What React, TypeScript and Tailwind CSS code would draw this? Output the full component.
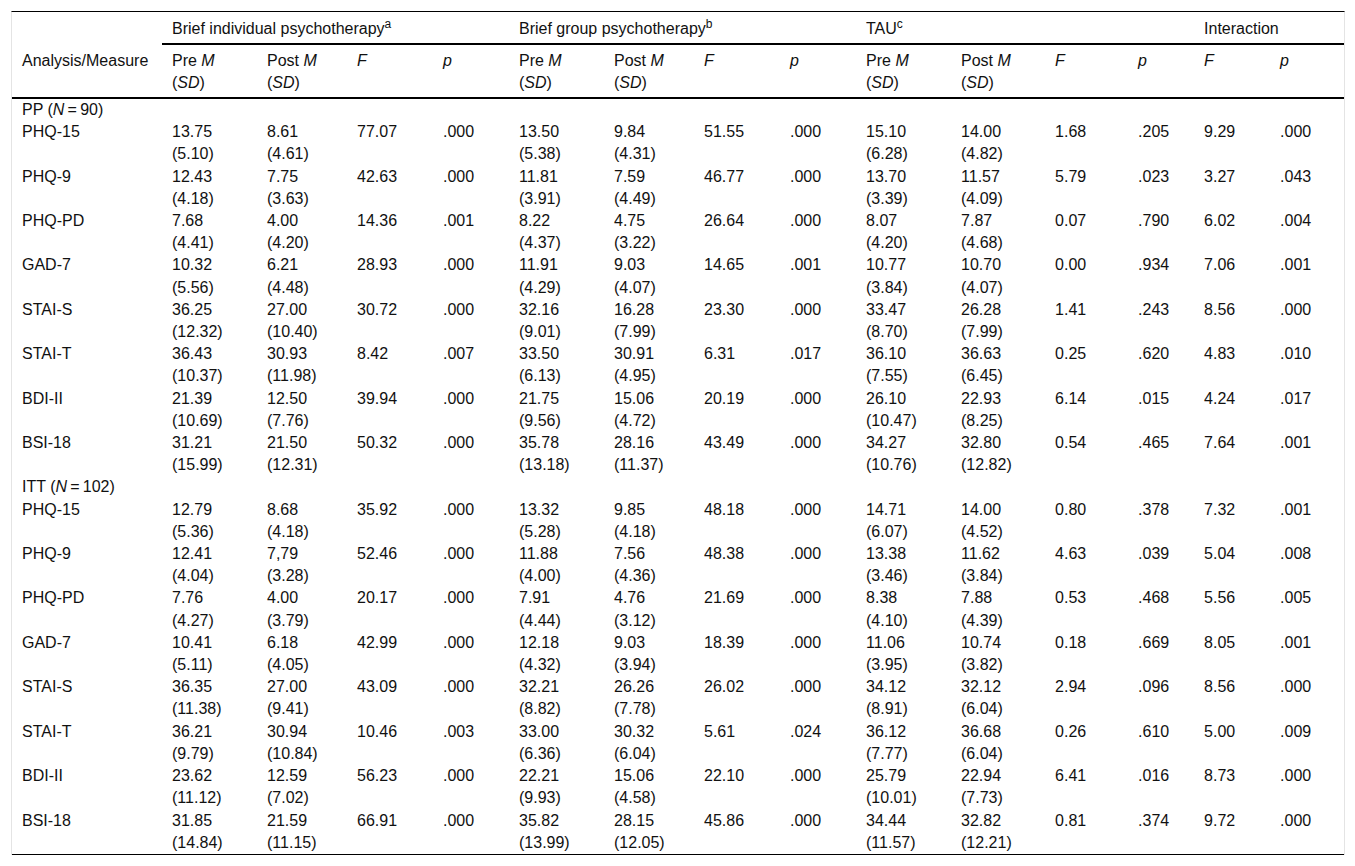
const colWidths = [
  "w-[150px]",
  "w-[95px]",
  "w-[90px]",
  "w-[86px]",
  "w-[76px]",
  "w-[95px]",
  "w-[90px]",
  "w-[86px]",
  "w-[76px]",
  "w-[95px]",
  "w-[94px]",
  "w-[83px]",
  "w-[66px]",
  "w-[76px]",
  "w-[74px]",
];

type Row = { label: string; cells: string[] } | { group: string; n: string };

// pre/post cells hold "mean (sd)" and get split over two lines
const rows: Row[] = [
  { group: "PP", n: "90" },
  { label: "PHQ-15", cells: ["13.75 (5.10)", "8.61 (4.61)", "77.07", ".000", "13.50 (5.38)", "9.84 (4.31)", "51.55", ".000", "15.10 (6.28)", "14.00 (4.82)", "1.68", ".205", "9.29", ".000"] },
  { label: "PHQ-9", cells: ["12.43 (4.18)", "7.75 (3.63)", "42.63", ".000", "11.81 (3.91)", "7.59 (4.49)", "46.77", ".000", "13.70 (3.39)", "11.57 (4.09)", "5.79", ".023", "3.27", ".043"] },
  { label: "PHQ-PD", cells: ["7.68 (4.41)", "4.00 (4.20)", "14.36", ".001", "8.22 (4.37)", "4.75 (3.22)", "26.64", ".000", "8.07 (4.20)", "7.87 (4.68)", "0.07", ".790", "6.02", ".004"] },
  { label: "GAD-7", cells: ["10.32 (5.56)", "6.21 (4.48)", "28.93", ".000", "11.91 (4.29)", "9.03 (4.07)", "14.65", ".001", "10.77 (3.84)", "10.70 (4.07)", "0.00", ".934", "7.06", ".001"] },
  { label: "STAI-S", cells: ["36.25 (12.32)", "27.00 (10.40)", "30.72", ".000", "32.16 (9.01)", "16.28 (7.99)", "23.30", ".000", "33.47 (8.70)", "26.28 (7.99)", "1.41", ".243", "8.56", ".000"] },
  { label: "STAI-T", cells: ["36.43 (10.37)", "30.93 (11.98)", "8.42", ".007", "33.50 (6.13)", "30.91 (4.95)", "6.31", ".017", "36.10 (7.55)", "36.63 (6.45)", "0.25", ".620", "4.83", ".010"] },
  { label: "BDI-II", cells: ["21.39 (10.69)", "12.50 (7.76)", "39.94", ".000", "21.75 (9.56)", "15.06 (4.72)", "20.19", ".000", "26.10 (10.47)", "22.93 (8.25)", "6.14", ".015", "4.24", ".017"] },
  { label: "BSI-18", cells: ["31.21 (15.99)", "21.50 (12.31)", "50.32", ".000", "35.78 (13.18)", "28.16 (11.37)", "43.49", ".000", "34.27 (10.76)", "32.80 (12.82)", "0.54", ".465", "7.64", ".001"] },
  { group: "ITT", n: "102" },
  { label: "PHQ-15", cells: ["12.79 (5.36)", "8.68 (4.18)", "35.92", ".000", "13.32 (5.28)", "9.85 (4.18)", "48.18", ".000", "14.71 (6.07)", "14.00 (4.52)", "0.80", ".378", "7.32", ".001"] },
  { label: "PHQ-9", cells: ["12.41 (4.04)", "7,79 (3.28)", "52.46", ".000", "11.88 (4.00)", "7.56 (4.36)", "48.38", ".000", "13.38 (3.46)", "11.62 (3.84)", "4.63", ".039", "5.04", ".008"] },
  { label: "PHQ-PD", cells: ["7.76 (4.27)", "4.00 (3.79)", "20.17", ".000", "7.91 (4.44)", "4.76 (3.12)", "21.69", ".000", "8.38 (4.10)", "7.88 (4.39)", "0.53", ".468", "5.56", ".005"] },
  { label: "GAD-7", cells: ["10.41 (5.11)", "6.18 (4.05)", "42.99", ".000", "12.18 (4.32)", "9.03 (3.94)", "18.39", ".000", "11.06 (3.95)", "10.74 (3.82)", "0.18", ".669", "8.05", ".001"] },
  { label: "STAI-S", cells: ["36.35 (11.38)", "27.00 (9.41)", "43.09", ".000", "32.21 (8.82)", "26.26 (7.78)", "26.02", ".000", "34.12 (8.91)", "32.12 (6.04)", "2.94", ".096", "8.56", ".000"] },
  { label: "STAI-T", cells: ["36.21 (9.79)", "30.94 (10.84)", "10.46", ".003", "33.00 (6.36)", "30.32 (6.04)", "5.61", ".024", "36.12 (7.77)", "36.68 (6.04)", "0.26", ".610", "5.00", ".009"] },
  { label: "BDI-II", cells: ["23.62 (11.12)", "12.59 (7.02)", "56.23", ".000", "22.21 (9.93)", "15.06 (4.58)", "22.10", ".000", "25.79 (10.01)", "22.94 (7.73)", "6.41", ".016", "8.73", ".000"] },
  { label: "BSI-18", cells: ["31.85 (14.84)", "21.59 (11.15)", "66.91", ".000", "35.82 (13.99)", "28.15 (12.05)", "45.86", ".000", "34.44 (11.57)", "32.82 (12.21)", "0.81", ".374", "9.72", ".000"] },
];

const groups = [
  { title: "Brief individual psychotherapy", sup: "a", span: 4 },
  { title: "Brief group psychotherapy", sup: "b", span: 4 },
  { title: "TAU", sup: "c", span: 4 },
  { title: "Interaction", sup: "", span: 2 },
];

const subHeads = ["pre", "post", "F", "p", "pre", "post", "F", "p", "pre", "post", "F", "p", "F", "p"];

function SubHead({ kind }: { kind: string }) {
  if (kind === "pre" || kind === "post") {
    return (
      <>
        {kind === "pre" ? "Pre" : "Post"} <i>M</i>
        <br />(<i>SD</i>)
      </>
    );
  }
  return <i>{kind}</i>;
}

function Cell({ value }: { value: string }) {
  const [mean, sd] = value.split(" ");
  if (!sd) return <>{value}</>;
  return (
    <>
      {mean}
      <br />
      {sd}
    </>
  );
}

export default function App() {
  return (
    <div className="min-h-[866px] bg-white pt-[11px] pl-[11px]">
      <div className="w-[1334px] border-x border-t border-x-[#e4e4e4] border-t-black">
        <table className="w-[1332px] table-fixed border-separate border-spacing-0 font-['Liberation_Sans',Arial,sans-serif] text-[16px] text-[#111]">
          <colgroup>
            {colWidths.map((w, i) => (
              <col key={i} className={w} />
            ))}
          </colgroup>
          <thead>
            <tr>
              <th className="pt-[6px] pb-[3px] leading-[22px]" />
              {groups.map((g) => (
                <th
                  key={g.title}
                  colSpan={g.span}
                  className="border-b-2 border-black pt-[6px] pb-[3px] pl-[10px] text-left align-top font-normal leading-[22px]"
                >
                  {g.title}
                  {g.sup && <sup>{g.sup}</sup>}
                </th>
              ))}
            </tr>
            <tr>
              <th className="border-b-2 border-black pt-[5px] pb-[3px] pl-[10px] text-left align-top font-normal leading-[22px]">
                Analysis/Measure
              </th>
              {subHeads.map((k, i) => (
                <th
                  key={i}
                  className="border-b-2 border-black pt-[5px] pb-[3px] pl-[10px] text-left align-top font-normal leading-[22px]"
                >
                  <SubHead kind={k} />
                </th>
              ))}
            </tr>
          </thead>
          <tbody>
            {rows.map((row, r) => {
              const last = r === rows.length - 1;
              const td = last
                ? "border-b border-black pl-[10px] text-left align-top leading-[22.2px]"
                : "pl-[10px] text-left align-top leading-[22.2px]";
              if ("group" in row) {
                return (
                  <tr key={r}>
                    <td className={td}>
                      {row.group} (<i>N</i>
                      {"\u2009=\u2009"}
                      {row.n})
                    </td>
                    {subHeads.map((_, i) => (
                      <td key={i} className={td} />
                    ))}
                  </tr>
                );
              }
              return (
                <tr key={r}>
                  <td className={td}>{row.label}</td>
                  {row.cells.map((c, i) => (
                    <td key={i} className={td}>
                      <Cell value={c} />
                    </td>
                  ))}
                </tr>
              );
            })}
          </tbody>
        </table>
      </div>
    </div>
  );
}
